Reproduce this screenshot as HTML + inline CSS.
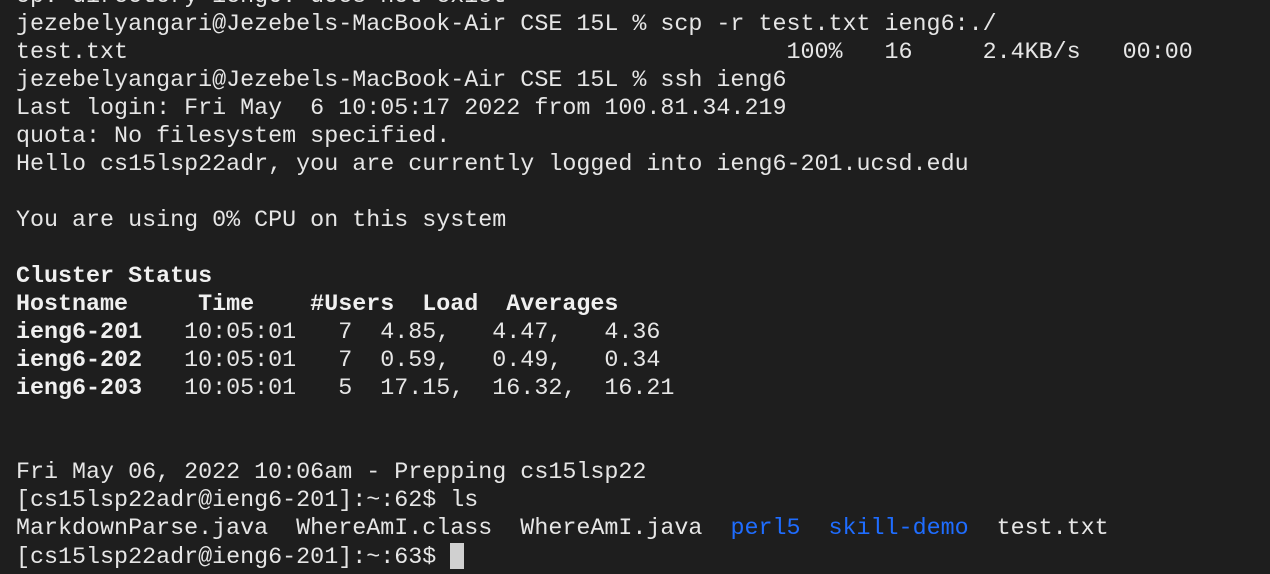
<!DOCTYPE html>
<html><head><meta charset="utf-8"><style>
html,body{margin:0;padding:0;background:#1e1e1e;width:1270px;height:574px;overflow:hidden}
pre{position:absolute;left:16px;top:-17px;margin:0;font-family:"Liberation Mono",monospace;font-size:23.35px;line-height:28px;color:#e6e6e6;white-space:pre}
b{font-weight:bold;color:#f0f0f0}
.bl{color:#1f6dff}
.cur{display:inline-block;width:14px;height:26px;background:#d0d0d0;vertical-align:-6px}
</style></head><body>
<pre>cp: directory ieng6: does not exist
jezebelyangari@Jezebels-MacBook-Air CSE 15L % scp -r test.txt ieng6:./
test.txt                                               100%   16     2.4KB/s   00:00
jezebelyangari@Jezebels-MacBook-Air CSE 15L % ssh ieng6
Last login: Fri May  6 10:05:17 2022 from 100.81.34.219
quota: No filesystem specified.
Hello cs15lsp22adr, you are currently logged into ieng6-201.ucsd.edu

You are using 0% CPU on this system

<b>Cluster Status</b>
<b>Hostname     Time    #Users  Load  Averages</b>
<b>ieng6-201</b>   10:05:01   7  4.85,   4.47,   4.36
<b>ieng6-202</b>   10:05:01   7  0.59,   0.49,   0.34
<b>ieng6-203</b>   10:05:01   5  17.15,  16.32,  16.21


Fri May 06, 2022 10:06am - Prepping cs15lsp22
[cs15lsp22adr@ieng6-201]:~:62$ ls
MarkdownParse.java  WhereAmI.class  WhereAmI.java  <span class="bl">perl5</span>  <span class="bl">skill-demo</span>  test.txt
[cs15lsp22adr@ieng6-201]:~:63$ <span class="cur"></span></pre>
</body></html>
